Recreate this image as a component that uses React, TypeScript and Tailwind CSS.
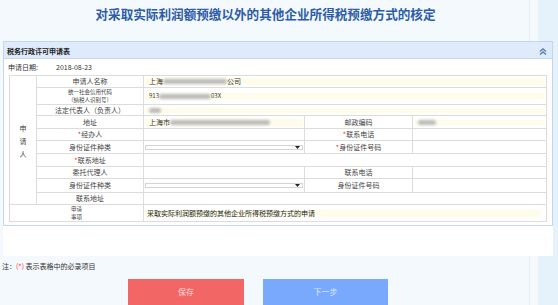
import React from "react";

const font = { fontFamily: '"Noto Sans CJK SC", "Noto Sans", sans-serif' };

function Blur({ w }: { w: number }) {
  return (
    <span
      className="inline-block h-[5px] rounded-sm bg-[#b9b9b9] blur-[1.5px] align-middle"
      style={{ width: w }}
    />
  );
}

function Req() {
  return <span className="text-[#ff2020]">*</span>;
}

function Label({ children }: { children: React.ReactNode }) {
  return (
    <td className="border border-[#dcdcdc] bg-white p-0 text-center text-[7px] leading-none text-[#444]">
      {children}
    </td>
  );
}

function Value({ children, span = 1 }: { children?: React.ReactNode; span?: number }) {
  return (
    <td colSpan={span} className="border border-[#dcdcdc] bg-white p-px">
      <div className="flex h-full items-center bg-[#fffde9] px-1 text-[7px] leading-none text-[#333]">
        {children}
      </div>
    </td>
  );
}

function SelectCell() {
  return (
    <td className="border border-[#dcdcdc] bg-white p-px">
      <div className="flex h-full items-center justify-end border border-[#d4d4d4] bg-white pr-[2px]">
        <svg width="5" height="3" viewBox="0 0 5 3">
          <path d="M0 0h5L2.5 3z" fill="#222" />
        </svg>
      </div>
    </td>
  );
}

export default function App() {
  return (
    <div className="flex h-[305px] w-[558px] flex-col overflow-hidden bg-[#f4f9fe]" style={font}>
      {/* Title band */}
      <div className="flex h-[41px]">
        <div className="flex w-[530px] items-center justify-center border-r border-[#e2ecf6] pb-[12px] pl-[2px]">
          <h1 className="text-[12.6px] font-bold leading-none text-[#2d5ca6]">
            对采取实际利润额预缴以外的其他企业所得税预缴方式的核定
          </h1>
        </div>
        <div className="w-[8px]" />
        <div className="flex-1 bg-[#e5f1fb]" />
      </div>

      {/* Form box */}
      <div className="flex h-[215px]">
        <div className="w-[3px]" />
        <div className="w-[550px] bg-white">
          <div className="flex h-[185px] flex-col border border-[#c6d6ea]">
            <div className="flex h-[17px] items-center justify-between border-b border-[#c6d6ea] bg-[#dfeafa] pl-[3px] pr-[5px] pt-[2px]">
              <span className="text-[7px] font-bold leading-none text-[#222]">税务行政许可申请表</span>
              <svg width="8" height="7" viewBox="0 0 8 7">
                <path d="M1 3.5 4 1l3 2.5M1 6.5 4 4l3 2.5" fill="none" stroke="#5b7fae" strokeWidth="1.4" />
              </svg>
            </div>
            <div className="flex h-[16px] items-center pl-[4px] text-[7px] leading-none text-[#333]">
              <span className="w-[48px]">申请日期:</span>
              <span>2018-08-23</span>
            </div>
            <div className="px-[5px]">
              <table className="w-[538px] table-fixed border-collapse border border-[#d4d4d4]">
                <colgroup>
                  <col className="w-[27px]" />
                  <col className="w-[107px]" />
                  <col className="w-[161px]" />
                  <col className="w-[108px]" />
                  <col />
                </colgroup>
                <tbody>
                  <tr className="h-[12px]">
                    <td rowSpan={10} className="border border-[#dcdcdc] bg-white p-0 pt-[46px] align-top text-center text-[7px] leading-[13px] text-[#444]">
                      申<br />请<br />人
                    </td>
                    <Label>申请人名称</Label>
                    <Value span={3}>
                      上海<Blur w={64} />公司
                    </Value>
                  </tr>
                  <tr className="h-[16px]">
                    <Label>
                      <div className="text-[5.5px] leading-[8px]">统一社会信用代码</div>
                      <div className="text-[5.5px] leading-[8px]">（纳税人识别号）</div>
                    </Label>
                    <Value span={3}>
                      <span className="text-[6px]">913</span>
                      <Blur w={52} />
                      <span className="text-[6px]">03X</span>
                    </Value>
                  </tr>
                  <tr className="h-[11px]">
                    <Label>法定代表人（负责人）</Label>
                    <Value span={3}>
                      <Blur w={12} />
                    </Value>
                  </tr>
                  <tr className="h-[13px]">
                    <Label>地址</Label>
                    <Value>
                      上海市<Blur w={100} />
                    </Value>
                    <Label>邮政编码</Label>
                    <Value>
                      <Blur w={18} />
                    </Value>
                  </tr>
                  <tr className="h-[12px]">
                    <Label>
                      <Req />经办人
                    </Label>
                    <Value />
                    <Label>
                      <Req />联系电话
                    </Label>
                    <Value />
                  </tr>
                  <tr className="h-[13px]">
                    <Label>身份证件种类</Label>
                    <SelectCell />
                    <Label>
                      <Req />身份证件号码
                    </Label>
                    <Value />
                  </tr>
                  <tr className="h-[13px]">
                    <Label>
                      <Req />联系地址
                    </Label>
                    <Value span={3} />
                  </tr>
                  <tr className="h-[12px]">
                    <Label>委托代理人</Label>
                    <Value />
                    <Label>联系电话</Label>
                    <Value />
                  </tr>
                  <tr className="h-[14px]">
                    <Label>身份证件种类</Label>
                    <SelectCell />
                    <Label>身份证件号码</Label>
                    <Value />
                  </tr>
                  <tr className="h-[12px]">
                    <Label>联系地址</Label>
                    <Value span={3} />
                  </tr>
                  <tr className="h-[16px]">
                    <td colSpan={2} className="border border-[#dcdcdc] bg-white p-0 text-center text-[5.5px] text-[#444]">
                      <div className="leading-[8px]">申请</div>
                      <div className="leading-[8px]">事项</div>
                    </td>
                    <td colSpan={3} className="border border-[#dcdcdc] bg-white py-px pl-px pr-[6px]">
                      <div className="flex h-full items-center bg-[#fffde9] px-[2px] text-[7px] leading-none text-[#222]">
                        采取实际利润额预缴的其他企业所得税预缴方式的申请
                      </div>
                    </td>
                  </tr>
                </tbody>
              </table>
            </div>
          </div>
        </div>
        <div className="flex-1 bg-[#e5f1fb]" />
      </div>

      {/* Notes and buttons */}
      <div className="flex flex-1">
        <div className="flex w-[530px] flex-col border-r border-[#e2ecf6] pt-[7px]">
          <p className="pl-[2px] text-[7px] leading-none text-[#333]">
            注：<span className="text-[#ff3030]">(*)</span> 表示表格中的必录项目
          </p>
          <div className="mt-[9px] flex gap-[19px] pl-[128px]">
            <button className="h-[26px] w-[116px] bg-[#f26666] text-[8px] text-[#ffdcdc]">保存</button>
            <button className="h-[26px] w-[125px] bg-[#78a9fd] text-[8px] text-[#dde9ff]">下一步</button>
          </div>
        </div>
        <div className="w-[8px]" />
        <div className="flex-1 bg-[#e5f1fb]" />
      </div>
    </div>
  );
}
